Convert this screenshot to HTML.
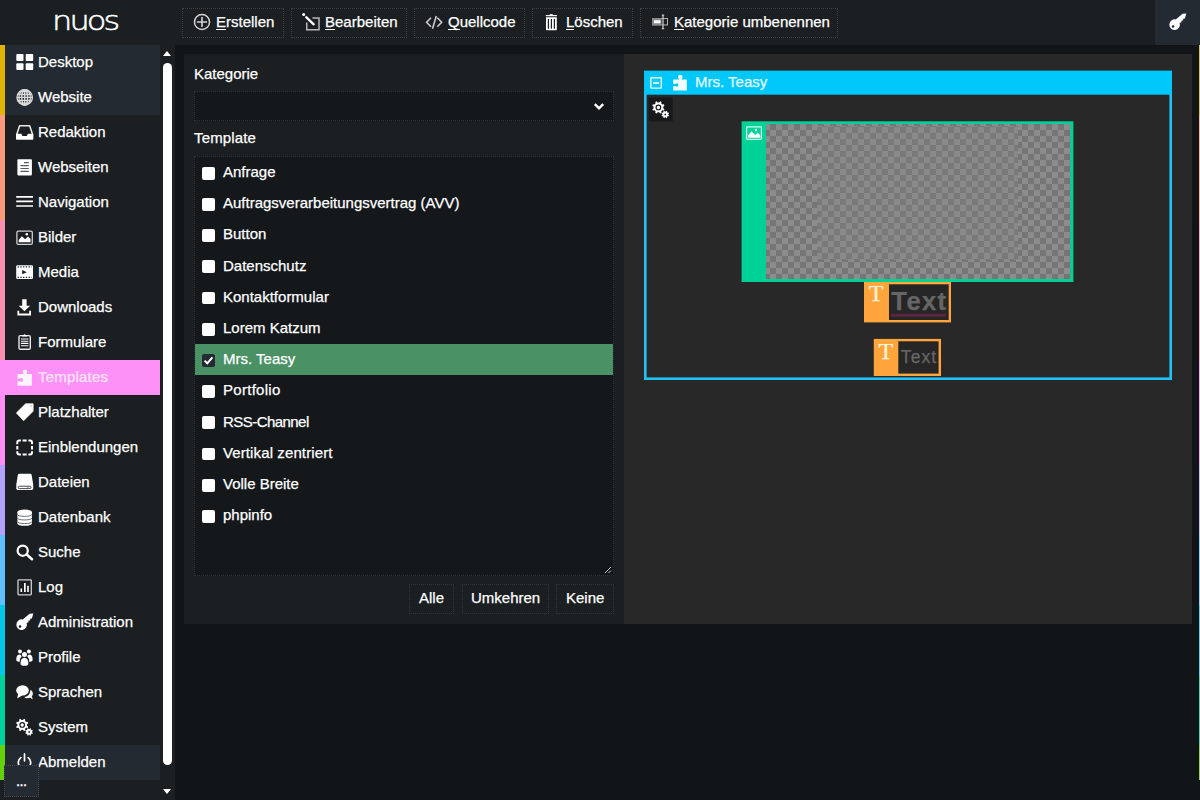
<!DOCTYPE html>
<html lang="de">
<head>
<meta charset="utf-8">
<title>nuos – Templates</title>
<style>
*{box-sizing:border-box;margin:0;padding:0}
html,body{width:1200px;height:800px;overflow:hidden;background:#111518;color:#fff;
  font-family:"Liberation Sans",sans-serif;font-size:15px;line-height:1;-webkit-text-stroke:.250px currentColor}
.abs{position:absolute}
/* top bar */
#top{position:absolute;left:0;top:0;width:1200px;height:45px;background:#1b1f22}
#logo{position:absolute;left:52px;top:5px;transform:scaleX(1.17);transform-origin:0 50%;letter-spacing:-2.500px;-webkit-text-stroke:.500px #fff;font-family:"DejaVu Sans Light","DejaVu Sans",sans-serif;font-weight:200;font-size:27.400px;line-height:32px;color:#fff;white-space:nowrap}
.tb{position:absolute;top:8px;height:30px;border:1px dotted #3b4147;display:flex;align-items:center;
  white-space:nowrap;color:#fff}
.tb svg{position:absolute}
.tb span{position:absolute;top:5px}
.tb u{text-decoration:none;border-bottom:1.500px solid #fff;display:inline-block;line-height:15px;height:15.600px}
#keybtn{position:absolute;left:1155px;top:0;width:45px;height:45px;background:#242a31}
/* sidebar */
#side{position:absolute;left:0;top:45px;width:175px;height:755px;background:#1b1f22}
#strip{position:absolute;left:0;top:0;width:5px;height:735px}
#strip i{display:block;width:5px}
#rstrip{position:absolute;left:1199px;top:45px;width:1px;height:735px}
#rstrip i{display:block;width:1px}
.mi{position:absolute;left:5px;width:155px;height:35px;color:#fff}
.mi span{position:absolute;left:33px;top:9px;white-space:nowrap}
.mi svg{position:absolute;left:10px;top:8px;width:19px;height:19px}
.mi.hl{background:#242a31}
.mi.sel{left:0;width:160px;background:#fd91f8;color:#ffe6fc;letter-spacing:.200px}
.mi.sel span{left:38px}
.mi.sel svg{left:15px}
#more{position:absolute;left:4px;top:765px;width:35px;height:32px;border:1px dotted #454b52;background:#242a31;z-index:3}
#sbar{position:absolute;left:160px;top:0;width:15px;height:755px}
#sbar i{position:absolute;display:block}
#sbar .up{left:3px;top:6px;width:0;height:0;border-left:4.700px solid transparent;border-right:4.700px solid transparent;border-bottom:5.200px solid #fff}
#sbar .dn{left:3px;top:744px;width:0;height:0;border-left:4.700px solid transparent;border-right:4.700px solid transparent;border-top:5.200px solid #fff}
#sbar .thumb{left:3px;top:18px;width:9px;height:702px;border-radius:4.5px;background:#fff}
#more span{position:absolute;left:11.500px;top:10.500px;font-size:11px;letter-spacing:.500px;font-weight:bold}
.rsz{position:absolute;right:1px;bottom:1px}
#pv{position:absolute;left:0;top:0}
#ctitle{position:absolute;left:71px;top:20.400px;color:#e4f9ff;white-space:nowrap}
.tt{position:absolute;font-family:"Liberation Serif",serif;font-style:normal;font-size:24px;color:#fff3dc;line-height:1}
#tx1{position:absolute;left:267.300px;top:235.400px;font-size:25.500px;letter-spacing:1.400px;color:#666;line-height:1;white-space:nowrap}
#tx2{position:absolute;left:276.800px;top:295.300px;font-size:17.500px;letter-spacing:1.100px;color:#666;font-style:normal;line-height:1;white-space:nowrap}
/* main */
#panel{position:absolute;left:184px;top:54px;width:440px;height:570px;background:#1b1f22}
#prev{position:absolute;left:624px;top:54px;width:568px;height:570px;background:#282828}
label.l{position:absolute;left:10px;white-space:nowrap}
#sel{position:absolute;left:10px;top:37px;width:420px;height:30px;border:1px dotted #2e3439;background:#14181b}
#list{position:absolute;left:10px;top:102px;width:420px;height:420px;border:1px dotted #2e3439;background:#14181b}
.row{position:absolute;left:0;width:418px;height:31.2px}
.row b{position:absolute;left:7.200px;top:9.800px;width:13.200px;height:12.800px;background:#fff;border-radius:2px;font-weight:normal}
.row span{position:absolute;left:28px;top:7px;white-space:nowrap}
.row.on{background:#4a9165}
.row.on b{background:#262b33}
.sb{position:absolute;top:530px;height:30px;border:1px dotted #30363b;white-space:nowrap}
.sb span{position:absolute;top:4.600px}
</style>
</head>
<body>
<div id="top">
  <div id="logo">nuos</div>
  <div class="tb" style="left:182px;width:102px"><svg viewBox="0 0 20 20" width="20" height="20" style="left:9.200px;top:3.25px"><circle cx="10" cy="10" r="7.550" fill="none" stroke="#d2d2d2" stroke-width="1.500"/><path d="M4.900 10H15.100M10 4.900V15.100" stroke="#d2d2d2" stroke-width="1.600"/></svg><span style="left:33px"><u>E</u>rstellen</span></div>
  <div class="tb" style="left:291px;width:116px"><svg viewBox="0 0 20 20" width="20" height="20" style="left:10px;top:4px"><path d="M10.500 4.950H17V16.750H4.750V9.600" fill="none" stroke="#b8b8b8" stroke-width="1.500"/><path d="M4.200 4.200L11.700 11.300" stroke="#fff" stroke-width="2.300" stroke-linecap="round"/><circle cx="1.700" cy="1.500" r="1.500" fill="#fff"/></svg><span style="left:33px"><u>B</u>earbeiten</span></div>
  <div class="tb" style="left:414px;width:111px"><svg viewBox="0 0 20 20" width="20" height="20" style="left:10px;top:4px"><path d="M6 4.800L1.600 9.300L6 13.800M12.300 4.800L16.700 9.300L12.300 13.800M11.300 2.900L7.500 15.800" fill="none" stroke="#cacaca" stroke-width="1.600"/></svg><span style="left:33px"><u>Q</u>uellcode</span></div>
  <div class="tb" style="left:532px;width:101px"><svg viewBox="0 0 20 20" width="20" height="20" style="left:8px;top:3px"><path d="M4.800 3H15.900V4.300H4.800ZM8.500 3Q8.500 1.900 10.350 1.900Q12.200 1.900 12.200 3Z" fill="#f4f4f4"/><path d="M5 5.200H15.800V17.500Q15.800 18.300 15 18.300H5.800Q5 18.300 5 17.500Z" fill="#fff"/><path d="M7.400 7.300V16.200M10.400 7.300V16.200M13.400 7.300V16.200" stroke="#1b1f22" stroke-width="1.200" stroke-linecap="round"/></svg><span style="left:33px"><u>L</u>öschen</span></div>
  <div class="tb" style="left:640px;width:198px"><svg viewBox="0 0 20 20" width="20" height="20" style="left:9px;top:3px"><rect x="2.500" y="6.500" width="15" height="6.400" fill="#1b1f22" stroke="#b0b0b0" stroke-width="1"/><rect x="2" y="6" width="9.500" height="7.400" fill="#8a8a8a"/><rect x="4" y="8.300" width="6.500" height="2.900" fill="#fff"/><path d="M13 3.200V16.600M11.800 3.200H14.200M11.800 16.600H14.200" stroke="#c4c4c4" stroke-width="1.300"/></svg><span style="left:33px"><u>K</u>ategorie umbenennen</span></div>
  <div id="keybtn"><svg viewBox="0 0 19 19" width="19" height="19" style="position:absolute;left:13.200px;top:13px"><path d="M18.300 .600L16.900 5.600L15.400 5.400L15.100 7.600L13.600 7.400L13.300 9.500L11.600 9.800A5.300 5.300 0 1 1 7.800 6.500L14.600 .700Z" fill="#fff"/><circle cx="5" cy="13.400" r="1.250" fill="#242a31"/></svg></div>
</div>
<div id="side">
  <div id="strip"><i style="height:70px;background:#e2b400"></i><i style="height:105px;background:#ff9a7a"></i><i style="height:140px;background:#ff8fb0"></i><i style="height:105px;background:#ff8df5"></i><i style="height:70px;background:#b4a0ff"></i><i style="height:70px;background:#5fc0ff"></i><i style="height:70px;background:#00c8e6"></i><i style="height:70px;background:#00d29a"></i><i style="height:35px;background:#64d20a"></i></div>
  <div class="mi hl" style="top:0"><svg viewBox="0 0 19 19"><g fill="#fff"><rect x="1.3" y="1.1" width="7.2" height="6.8" rx="1"/><rect x="10.7" y="1.1" width="7.5" height="6.8" rx="1"/><rect x="1.3" y="10.3" width="7.2" height="6.6" rx="1"/><rect x="10.7" y="10.3" width="7.5" height="6.6" rx="1"/></g></svg><span>Desktop</span></div>
  <div class="mi hl" style="top:35px"><svg viewBox="0 0 19 19"><g fill="none" stroke="#dcdcdc" stroke-width="1.300"><circle cx="9.700" cy="9.400" r="7.700"/><ellipse cx="9.700" cy="9.400" rx="2.900" ry="7.700"/><ellipse cx="9.700" cy="9.400" rx="5.700" ry="7.700"/><path d="M9.700 1.700V17.100M2 9.400H17.400M2.700 6.500H16.700M2.700 12.300H16.700M4.500 3.700H14.900M4.500 15.100H14.900"/></g></svg><span>Website</span></div>
  <div class="mi" style="top:70px"><svg viewBox="0 0 19 19"><path d="M1.8 11.2L4.6 2.8H14.7L17.5 11.2V15.8H1.8Z" fill="none" stroke="#e8e8e8" stroke-width="1.5" stroke-linejoin="round"/><path d="M1.1 10.8H6.4L7.4 13H11.9L12.9 10.8H18.2V16.5H1.1Z" fill="#fff"/></svg><span>Redaktion</span></div>
  <div class="mi" style="top:105px"><svg viewBox="0 0 19 19"><rect x="2.4" y="1.2" width="14.5" height="16.2" rx=".8" fill="#fff"/><path d="M9 4.7H13.8M5.5 7.6H13.8M5.5 10.5H13.8M5.5 13.4H13.8" stroke="#55595d" stroke-width="1.200"/></svg><span>Webseiten</span></div>
  <div class="mi" style="top:140px"><svg viewBox="0 0 19 19"><path d="M1.2 3.8H18M1.2 8.4H18M1.2 13H18" stroke="#fff" stroke-width="1.7"/></svg><span>Navigation</span></div>
  <div class="mi" style="top:175px"><svg viewBox="0 0 19 19"><rect x="1.9" y="3.1" width="15.4" height="13.3" rx="1.4" fill="none" stroke="#cfcfcf" stroke-width="1.3"/><path d="M3.7 14.2V12L6.8 8.2L10.2 11.2L13 8.6L15.6 11V14.2Z" fill="#fff"/><circle cx="11.8" cy="6.3" r="1.3" fill="#fff"/></svg><span>Bilder</span></div>
  <div class="mi" style="top:210px"><svg viewBox="0 0 19 19"><rect x="1.2" y="2.3" width="16.8" height="13.7" rx="1.2" fill="#fff"/><path d="M2.6 3.9H16.8M2.6 14.4H16.8" stroke="#1b1f22" stroke-width="1.3" stroke-dasharray="1.3 1.45"/><path d="M7.2 7.1V11.3L11.8 9.2Z" fill="#1b1f22"/></svg><span>Media</span></div>
  <div class="mi" style="top:245px"><svg viewBox="0 0 19 19"><path d="M7.2 1.2H11.6V7.7H15.1L9.4 13.3L3.7 7.7H7.2Z" fill="#fff"/><path d="M2.4 12.8H4.2V15.4H14.2V12.8H16V17.4H2.4Z" fill="#fff"/></svg><span>Downloads</span></div>
  <div class="mi" style="top:280px"><svg viewBox="0 0 19 19"><rect x="4" y="2.6" width="11.3" height="13.7" rx="1.3" fill="none" stroke="#e8e8e8" stroke-width="1.4"/><path d="M7 3.6V2.2H8.4Q9.6 .2 10.9 2.2H12.3V3.6Z" fill="#fff"/><path d="M5.9 6H13.4M5.9 8.2H13.4M5.9 10.4H13.4M5.9 12.7H13.4" stroke="#fff" stroke-width="1.15"/></svg><span>Formulare</span></div>
  <div class="mi sel" style="top:315px"><svg viewBox="0 0 19 19"><rect x="2.500" y="6.100" width="14.400" height="11.700" rx=".500" fill="#fff4fe"/><circle cx="10" cy="3.600" r="2.200" fill="#fff4fe"/><rect x="8.600" y="4.500" width="2.800" height="2" fill="#fff4fe"/><circle cx="6.200" cy="11.900" r="1.850" fill="#fd91f8"/><path d="M2.400 10.600L6.200 11.300V12.500L2.400 13.200Z" fill="#fd91f8"/></svg><span>Templates</span></div>
  <div class="mi" style="top:350px"><svg viewBox="0 0 19 19"><path d="M1.3 9.9L10.6 .7H18.2V8.2L8.6 17.8Z" fill="#fff" stroke="#fff" stroke-width=".6" stroke-linejoin="round"/><circle cx="16.1" cy="2.9" r=".7" fill="#9aa0a6"/></svg><span>Platzhalter</span></div>
  <div class="mi" style="top:385px"><svg viewBox="0 0 19 19"><path d="M2.3 6.2V4.6Q2.3 2.6 4.3 2.6H5.9M7.6 2.6H11.7M13.4 2.6H15Q17 2.6 17 4.6V6.2M17 7.9V11.5M17 13.2V14.4Q17 16.4 15 16.4H13.4M11.7 16.4H7.6M5.9 16.4H4.3Q2.3 16.4 2.3 14.4V13.2M2.3 11.5V7.9" fill="none" stroke="#fff" stroke-width="2"/></svg><span>Einblendungen</span></div>
  <div class="mi" style="top:420px"><svg viewBox="0 0 19 19"><path d="M4.2 .7H15.3Q16.3 .7 16.6 1.7L18.2 11.5V15.6Q18.2 17 16.8 17H2.7Q1.3 17 1.3 15.6V11.5L2.9 1.7Q3.2 .7 4.2 .7Z" fill="#fff"/><rect x="3.2" y="13.2" width="12.9" height="2.4" rx="1.2" fill="#fff" stroke="#30353a" stroke-width=".9"/><path d="M11.8 14.4H15" stroke="#555" stroke-width=".8" stroke-dasharray=".8 .8"/></svg><span>Dateien</span></div>
  <div class="mi" style="top:455px"><svg viewBox="0 0 19 19"><path d="M2.4 4V15.4C2.4 16.7 5.6 17.8 9.65 17.8S16.9 16.7 16.9 15.4V4Z" fill="#fff"/><ellipse cx="9.65" cy="4" rx="7.25" ry="2.4" fill="#fff"/><path d="M2.4 6.4C2.4 9 16.9 9 16.9 6.4M2.4 10C2.4 12.6 16.9 12.6 16.9 10M2.4 13.6C2.4 16.2 16.9 16.2 16.9 13.6" fill="none" stroke="#5a5e62" stroke-width=".900"/></svg><span>Datenbank</span></div>
  <div class="mi" style="top:490px"><svg viewBox="0 0 19 19"><circle cx="7.7" cy="7.7" r="5.1" fill="none" stroke="#fff" stroke-width="2.2"/><path d="M11.6 11.4L17 16.2" stroke="#fff" stroke-width="2.6" stroke-linecap="round"/></svg><span>Suche</span></div>
  <div class="mi" style="top:525px"><svg viewBox="0 0 19 19"><rect x="3" y="1.8" width="13.3" height="15" rx=".8" fill="none" stroke="#cfcfcf" stroke-width="1.3"/><path d="M5.5 10.4H7.1V13.9H5.5ZM9 5.1H10.7V13.9H9ZM12.2 7.7H13.8V13.9H12.2Z" fill="#fff"/></svg><span>Log</span></div>
  <div class="mi" style="top:560px"><svg viewBox="0 0 19 19"><path d="M18.300 .600L16.900 5.600L15.400 5.400L15.100 7.600L13.600 7.400L13.300 9.500L11.600 9.800A5.300 5.300 0 1 1 7.800 6.500L14.600 .700Z" fill="#fff"/><circle cx="5" cy="13.4" r="1.25" fill="#1b1f22"/></svg><span>Administration</span></div>
  <div class="mi" style="top:595px"><svg viewBox="0 0 19 19"><g fill="#fff"><circle cx="5" cy="3.6" r="2"/><circle cx="13.9" cy="3.6" r="2"/><path d="M1.3 12.6Q1 7 4.2 6.6Q6.2 6.6 6.6 8.4Q4.600 10.200 4.600 13.900Q2.400 13.900 1.300 12.600Z"/><path d="M17.6 12.6Q17.9 7 14.7 6.6Q12.700 6.600 12.300 8.400Q14.300 10.200 14.300 13.900Q16.500 13.900 17.600 12.600Z"/><circle cx="9.45" cy="6.5" r="2.5"/><path d="M5.500 15.800Q5.500 9.800 9.450 9.800Q13.400 9.800 13.400 15.800Q13.400 17.800 9.450 17.800Q5.500 17.800 5.500 15.800Z"/></g></svg><span>Profile</span></div>
  <div class="mi" style="top:630px"><svg viewBox="0 0 19 19"><path d="M11 15.2Q16.600 15.600 17.800 11.400Q18.300 8.500 15.400 6.700L14.900 9.600Q13.800 13.600 9.400 13.900Q9.800 14.800 11 15.200Z" fill="#f4f4f4"/><path d="M14.600 14.200L17.800 16.400L16.800 13Z" fill="#f4f4f4"/><ellipse cx="7.5" cy="7.4" rx="6.3" ry="5.2" fill="#fff"/><path d="M3.200 10.400L2.200 15.600L7.500 12.200Z" fill="#fff"/></svg><span>Sprachen</span></div>
  <div class="mi" style="top:665px"><svg viewBox="0 0 19 19"><path d="M12.04 7.67 L13.25 8.66 L12.72 9.94 L11.16 9.78 L10.08 10.86 L10.24 12.42 L8.96 12.95 L7.97 11.74 L6.43 11.74 L5.44 12.95 L4.16 12.42 L4.32 10.86 L3.24 9.78 L1.68 9.94 L1.15 8.66 L2.36 7.67 L2.36 6.13 L1.15 5.14 L1.68 3.86 L3.24 4.02 L4.32 2.94 L4.16 1.38 L5.44 0.85 L6.43 2.06 L7.97 2.06 L8.96 0.85 L10.24 1.38 L10.08 2.94 L11.16 4.02 L12.72 3.86 L13.25 5.14 L12.04 6.13Z" fill="#fff"/><circle cx="7.2" cy="6.9" r="2.300" fill="none" stroke="#1b1f22" stroke-width="1.150"/><path d="M17.06 14.37 L17.85 14.99 L17.52 15.78 L16.53 15.66 L15.86 16.33 L15.98 17.32 L15.19 17.65 L14.57 16.86 L13.63 16.86 L13.01 17.65 L12.22 17.32 L12.34 16.33 L11.67 15.66 L10.68 15.78 L10.35 14.99 L11.14 14.37 L11.14 13.43 L10.35 12.81 L10.68 12.02 L11.67 12.14 L12.34 11.47 L12.22 10.48 L13.01 10.15 L13.63 10.94 L14.57 10.94 L15.19 10.15 L15.98 10.48 L15.86 11.47 L16.53 12.14 L17.52 12.02 L17.85 12.81 L17.06 13.43Z" fill="#fff"/><circle cx="14.100" cy="13.900" r=".850" fill="#1b1f22"/></svg><span>System</span></div>
  <div class="mi hl" style="top:700px"><svg viewBox="0 0 19 19"><path d="M5.800 4.600A6.200 6.200 0 1 0 13.200 4.600" fill="none" stroke="#fff" stroke-width="1.7" stroke-linecap="round"/><path d="M9.5 .9V7.800" stroke="#fff" stroke-width="1.7" stroke-linecap="round"/></svg><span>Abmelden</span></div>
  <div id="sbar"><i class="up"></i><i class="thumb"></i><i class="dn"></i></div>
</div>
<div id="more"><span>...</span></div>
<div id="rstrip"><i style="height:70px;background:#d4c060"></i><i style="height:105px;background:#f0b8a8"></i><i style="height:140px;background:#f0b0c4"></i><i style="height:105px;background:#f0b0ee"></i><i style="height:70px;background:#c8bef4"></i><i style="height:70px;background:#98d0f4"></i><i style="height:70px;background:#60d0e4"></i><i style="height:70px;background:#60ccb0"></i><i style="height:35px;background:#98d060"></i></div>
<div id="panel">
  <label class="l" style="top:12px">Kategorie</label>
  <div id="sel"><svg viewBox="0 0 12 9" width="12" height="9" style="position:absolute;left:398px;top:10px"><path d="M1.800 2.200L6 6.300L10.200 2.200" fill="none" stroke="#fff" stroke-width="2.500"/></svg></div>
  <label class="l" style="top:76px;letter-spacing:.150px">Template</label>
  <div id="list">
    <div class="row" style="top:0.0px"><b></b><span>Anfrage</span></div>
    <div class="row" style="top:31.2px"><b></b><span>Auftragsverarbeitungsvertrag (AVV)</span></div>
    <div class="row" style="top:62.4px"><b></b><span>Button</span></div>
    <div class="row" style="top:93.6px"><b></b><span>Datenschutz</span></div>
    <div class="row" style="top:124.8px"><b></b><span>Kontaktformular</span></div>
    <div class="row" style="top:156.0px"><b></b><span>Lorem Katzum</span></div>
    <div class="row on" style="top:187.2px"><b><svg viewBox="0 0 13 13" width="13" height="13" style="position:absolute;left:0;top:0"><path d="M2.6 6.6L5.3 9.3L10.4 3.4" fill="none" stroke="#fff" stroke-width="2"/></svg></b><span>Mrs. Teasy</span></div>
    <div class="row" style="top:218.4px"><b></b><span style="letter-spacing:.280px">Portfolio</span></div>
    <div class="row" style="top:249.6px"><b></b><span style="letter-spacing:-.550px">RSS-Channel</span></div>
    <div class="row" style="top:280.8px"><b></b><span style="letter-spacing:.110px">Vertikal zentriert</span></div>
    <div class="row" style="top:312.0px"><b></b><span>Volle Breite</span></div>
    <div class="row" style="top:343.2px"><b></b><span>phpinfo</span></div>
    <svg class="rsz" viewBox="0 0 8 8" width="8" height="8"><path d="M1 7L7 1M4.500 7L7 4.500" stroke="#c8c8c8" stroke-width="1"/></svg>
  </div>
  <div class="sb" style="left:225px;width:45px"><span style="left:9px">Alle</span></div>
  <div class="sb" style="left:278px;width:87px"><span style="left:8px">Umkehren</span></div>
  <div class="sb" style="left:372px;width:58px"><span style="left:9px">Keine</span></div>
</div>
<div id="prev">
  <svg id="pv" viewBox="0 0 568 570" width="568" height="570">
    <defs><pattern id="ck" x="146" y="70" width="12" height="12" patternUnits="userSpaceOnUse"><rect width="12" height="12" fill="#8c8c8c"/><rect width="6" height="6" fill="#757575"/><rect x="6" y="6" width="6" height="6" fill="#757575"/></pattern><pattern id="ck2" x="0" y="7" width="12" height="12" patternUnits="userSpaceOnUse"><rect width="12" height="12" fill="#8a8a8a"/><rect x="6" width="6" height="6" fill="#797979"/><rect y="6" width="6" height="6" fill="#797979"/></pattern></defs>
    <rect x="21.300" y="18.100" width="525.400" height="306.600" fill="none" stroke="#1fc4f4" stroke-width="2.600"/>
    <rect x="20" y="16.800" width="528" height="23.900" fill="#00c8fa"/>
    <rect x="24.750" y="43.500" width="23.950" height="23.900" fill="#17191b"/>
    <rect x="117.600" y="67.300" width="331.800" height="160.700" fill="#00d297"/>
    <rect x="142" y="70" width="304.300" height="155" fill="url(#ck)"/>
    <rect x="193.300" y="72" width="200.900" height="133.500" fill="url(#ck2)"/>
    <rect x="240" y="228" width="87" height="40.400" fill="#ffa53c"/>
    <rect x="265" y="230.300" width="59.700" height="35.700" fill="#262626"/>
    <rect x="266.700" y="259.700" width="55.300" height="3" fill="#5a2541"/>
    <rect x="249.800" y="284.900" width="67.200" height="37.100" fill="#ffa53c"/>
    <rect x="274.300" y="287.300" width="40.300" height="32.300" fill="#262626"/>
    <g transform="translate(25 21.800)"><rect x="1.900" y="2" width="10.400" height="10.300" rx=".500" fill="none" stroke="#e8fbff" stroke-width="1.400"/><path d="M4 7.200H10.200" stroke="#e8fbff" stroke-width="1.800"/></g>
    <g transform="translate(46.800 19.700) scale(.950)"><rect x="2.500" y="6.100" width="14.400" height="11.700" rx=".500" fill="#f0fcff"/><circle cx="10" cy="3.500" r="2.400" fill="#f0fcff"/><rect x="8.500" y="4.500" width="3" height="2" fill="#f0fcff"/><circle cx="6.200" cy="11.900" r="1.850" fill="#00c8fa"/><path d="M2.400 10.600L6.200 11.300V12.500L2.400 13.200Z" fill="#00c8fa"/></g>
    <g transform="translate(27.200 46.500)"><path d="M12.04 7.67 L13.25 8.66 L12.72 9.94 L11.16 9.78 L10.08 10.86 L10.24 12.42 L8.96 12.95 L7.97 11.74 L6.43 11.74 L5.44 12.95 L4.16 12.42 L4.32 10.86 L3.24 9.78 L1.68 9.94 L1.15 8.66 L2.36 7.67 L2.36 6.13 L1.15 5.14 L1.68 3.86 L3.24 4.02 L4.32 2.94 L4.16 1.38 L5.44 0.85 L6.43 2.06 L7.97 2.06 L8.96 0.85 L10.24 1.38 L10.08 2.94 L11.16 4.02 L12.72 3.86 L13.25 5.14 L12.04 6.13Z" fill="#fff"/><circle cx="7.200" cy="6.900" r="2.300" fill="none" stroke="#17191b" stroke-width="1.150"/><path d="M17.06 14.37 L17.85 14.99 L17.52 15.78 L16.53 15.66 L15.86 16.33 L15.98 17.32 L15.19 17.65 L14.57 16.86 L13.63 16.86 L13.01 17.65 L12.22 17.32 L12.34 16.33 L11.67 15.66 L10.68 15.78 L10.35 14.99 L11.14 14.37 L11.14 13.43 L10.35 12.81 L10.68 12.02 L11.67 12.14 L12.34 11.47 L12.22 10.48 L13.01 10.15 L13.63 10.94 L14.57 10.94 L15.19 10.15 L15.98 10.48 L15.86 11.47 L16.53 12.14 L17.52 12.02 L17.85 12.81 L17.06 13.43Z" fill="#fff"/><circle cx="14.100" cy="13.900" r=".850" fill="#17191b"/></g>
    <g transform="translate(120.500 71.500)"><rect x="2.100" y="1.400" width="14.800" height="12.400" rx=".800" fill="none" stroke="#d8fff2" stroke-width="1.200"/><path d="M3.500 12.200V9.900L7 5.700L10.700 9.500L13.300 7L15.800 9.900V12.200Z" fill="#f0fffa"/><circle cx="11.400" cy="4.500" r="1.200" fill="#e6fff6"/></g>
  </svg>
  <span id="ctitle">Mrs. Teasy</span>
  <i class="tt" style="left:244.800px;top:227.300px">T</i>
  <b id="tx1">Text</b>
  <i class="tt" style="left:254.600px;top:285px">T</i>
  <em id="tx2">Text</em>
</div>
</body>
</html>
